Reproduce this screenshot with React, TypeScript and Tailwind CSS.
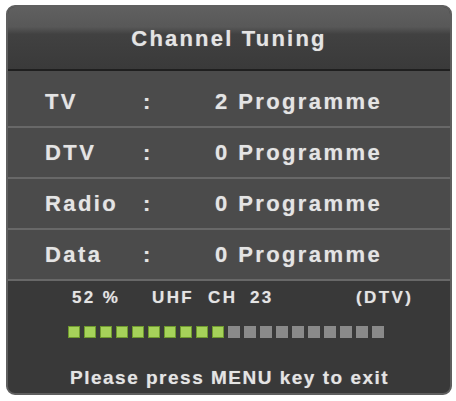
const rows = [
  { label: "TV", value: "2 Programme" },
  { label: "DTV", value: "0 Programme" },
  { label: "Radio", value: "0 Programme" },
  { label: "Data", value: "0 Programme" },
];

const SEGMENTS = 20;
const FILLED = 10;

function SignalBar() {
  return (
    <div className="flex gap-[4px]">
      {Array.from({ length: SEGMENTS }).map((_, i) =>
        i < FILLED ? (
          <div
            key={i}
            className="h-[12px] w-[12px] border border-[#6f9a2e] bg-[#a6d25a]"
          />
        ) : (
          <div key={i} className="h-[12px] w-[12px] bg-[#8a8a8a]" />
        )
      )}
    </div>
  );
}

export default function App() {
  return (
    <div
      className="h-[401px] w-[456px] bg-white pl-[6px] pt-[5px]"
      style={{ fontFamily: '"Liberation Sans", Arial, sans-serif' }}
    >
      <div className="flex h-[390px] w-[446px] flex-col overflow-hidden rounded-[9px] border-2 border-[#5f5f5f] bg-[#393939] font-bold text-[#e4e4e4] [text-shadow:0_0_1px_rgba(255,255,255,0.4)]">
        {/* header */}
        <div className="flex h-[64px] items-center justify-center border-b-2 border-[#1f1f1f] bg-[linear-gradient(to_bottom,#606060_0%,#585858_32%,#414141_44%,#3a3a3a_100%)]">
          <span className="text-[22px] tracking-[2.2px]">Channel Tuning</span>
        </div>

        {/* counts */}
        {rows.map((row, i) => (
          <div
            key={row.label}
            className={
              "flex items-center border-b-2 border-[#686868] bg-[#4b4b4b] pl-[37px] text-[22px] tracking-[2.4px] " +
              (i === 0 ? "h-[57px] pt-[6px]" : "h-[51px]")
            }
          >
            <span className="w-[98px]">{row.label}</span>
            <span className="w-[72px]">:</span>
            <span>{row.value}</span>
          </div>
        ))}

        {/* status */}
        <div className="flex flex-1 flex-col pl-[60px]">
          <div className="mt-[7px] flex h-[20px] items-center pl-[4px] text-[17px] tracking-[2.4px]">
            <span className="w-[80px]">52 %</span>
            <span className="w-[56px]">UHF</span>
            <span className="w-[42px]">CH</span>
            <span className="w-[106px]">23</span>
            <span>(DTV)</span>
          </div>
          <div className="mt-[18px]">
            <SignalBar />
          </div>
          <div className="mt-[26px] pl-[2px] text-[19px] tracking-[1.5px]">
            Please press MENU key to exit
          </div>
        </div>
      </div>
    </div>
  );
}
